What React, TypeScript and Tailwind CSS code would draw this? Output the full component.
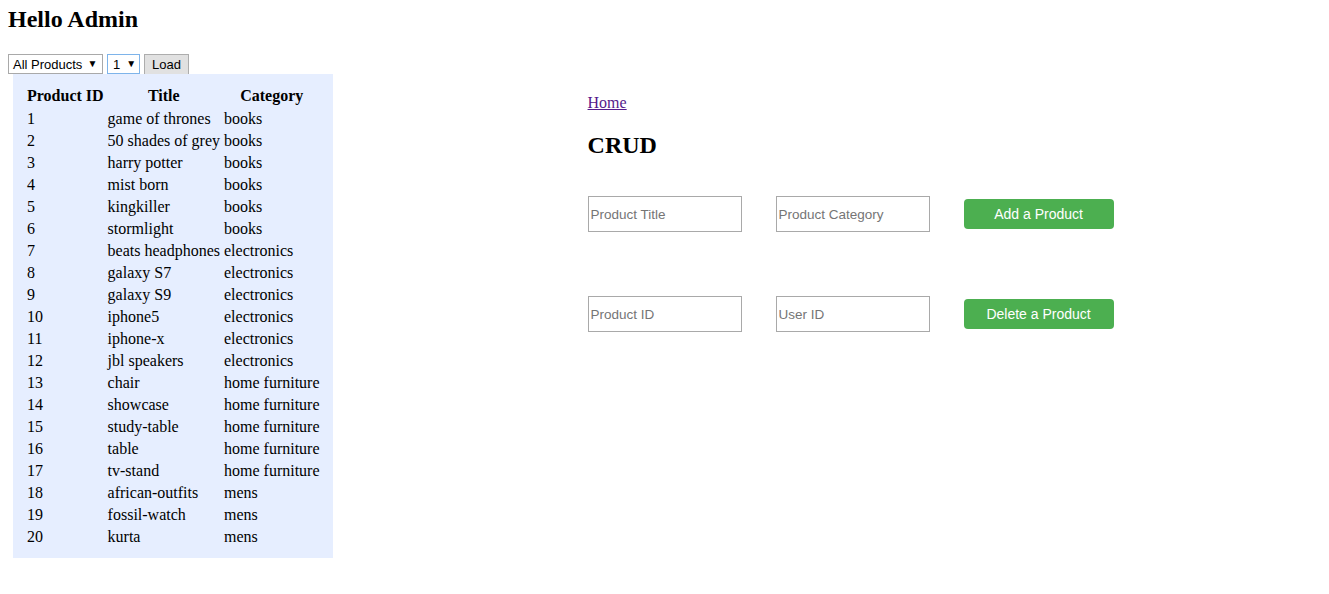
import React from "react";

const rows: [number, string, string][] = [
  [1, "game of thrones", "books"],
  [2, "50 shades of grey", "books"],
  [3, "harry potter", "books"],
  [4, "mist born", "books"],
  [5, "kingkiller", "books"],
  [6, "stormlight", "books"],
  [7, "beats headphones", "electronics"],
  [8, "galaxy S7", "electronics"],
  [9, "galaxy S9", "electronics"],
  [10, "iphone5", "electronics"],
  [11, "iphone-x", "electronics"],
  [12, "jbl speakers", "electronics"],
  [13, "chair", "home furniture"],
  [14, "showcase", "home furniture"],
  [15, "study-table", "home furniture"],
  [16, "table", "home furniture"],
  [17, "tv-stand", "home furniture"],
  [18, "african-outfits", "mens"],
  [19, "fossil-watch", "mens"],
  [20, "kurta", "mens"],
];

const serif = "font-['Liberation_Serif','Times_New_Roman',serif]";

function Field({ placeholder }: { placeholder: string }) {
  return (
    <input
      placeholder={placeholder}
      className="w-[154px] h-[36px] border border-[#a9a9a9] bg-white px-[2px] text-[13.5px] text-black placeholder:text-[#757575] font-['Liberation_Sans',Arial,sans-serif] outline-none"
    />
  );
}

function GreenButton({ label }: { label: string }) {
  return (
    <button className="w-[150px] h-[30px] rounded-[4px] bg-[#4caf50] text-white text-[14px] font-['Liberation_Sans',Arial,sans-serif] leading-none">
      {label}
    </button>
  );
}

export default function App() {
  return (
    <div className={`min-h-[594px] bg-white pl-2 pt-[5px] text-black ${serif}`}>
      <h2 className="text-[24px] leading-[28px] font-bold">Hello Admin</h2>

      <div className="mt-[21px] flex items-center gap-[4px] h-[20px] font-['Liberation_Sans',Arial,sans-serif] text-[13px]">
        <div className="h-[20px] w-[95px] border border-[#a9a9a9] bg-white flex items-center pl-[4px] gap-[5px] leading-none">
          <span>All Products</span>
          <span className="text-[10px]">▼</span>
        </div>
        <div className="h-[20px] w-[33px] border border-[#7eb4ea] bg-white flex items-center pl-[5px] gap-[6px] leading-none">
          <span>1</span>
          <span className="text-[10px]">▼</span>
        </div>
        <div className="h-[21px] w-[45px] border border-[#adadad] bg-[#e1e1e1] flex items-center justify-center leading-none">
          Load
        </div>
      </div>

      <div className="flex items-start">
        <div className="ml-[5px] bg-[#e6eeff] pt-[10px] pb-[9px] pl-[11px] pr-[10px]">
          <table className="border-separate border-spacing-[2px] text-[16px] leading-[18px]">
            <thead>
              <tr>
                <th className="pt-[1px] pb-[2px] px-[1px] font-bold text-center">Product ID</th>
                <th className="pt-[1px] pb-[2px] px-[1px] font-bold text-center">Title</th>
                <th className="pt-[1px] pb-[2px] px-[1px] font-bold text-center">Category</th>
              </tr>
            </thead>
            <tbody>
              {rows.map(([id, title, cat]) => (
                <tr key={id}>
                  <td className="p-[1px]">{id}</td>
                  <td className="p-[1px] whitespace-nowrap">{title}</td>
                  <td className="p-[1px] whitespace-nowrap">{cat}</td>
                </tr>
              ))}
            </tbody>
          </table>
        </div>

        <div className="ml-[255px] pt-[20px]">
          <a href="#" className="block text-[16px] leading-[18px] text-[#551a8b] underline w-fit">
            Home
          </a>
          <h2 className="mt-[19px] text-[24px] leading-[28px] font-bold">CRUD</h2>

          <div className="mt-[37px] flex items-center gap-[34px]">
            <Field placeholder="Product Title" />
            <Field placeholder="Product Category" />
            <GreenButton label="Add a Product" />
          </div>

          <div className="mt-[64px] flex items-center gap-[34px]">
            <Field placeholder="Product ID" />
            <Field placeholder="User ID" />
            <GreenButton label="Delete a Product" />
          </div>
        </div>
      </div>
    </div>
  );
}
